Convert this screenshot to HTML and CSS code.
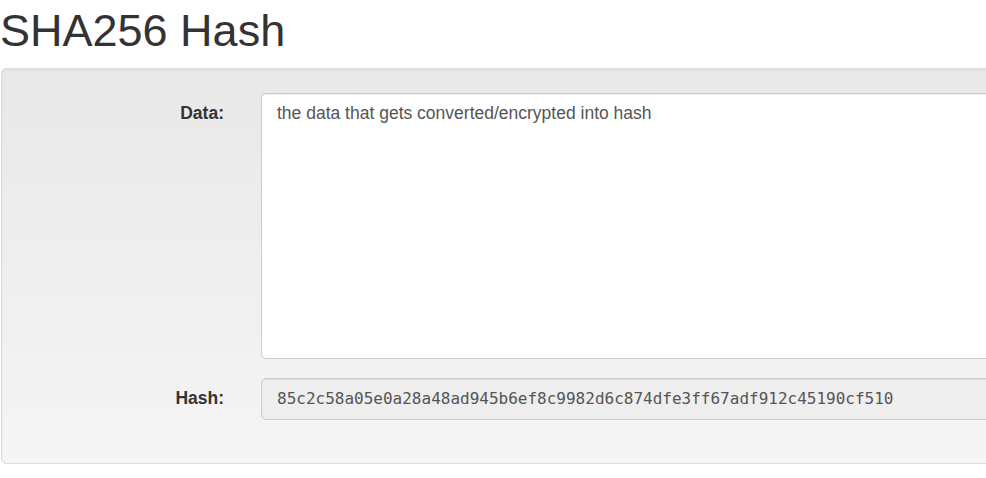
FILE: index.html
```html
<!DOCTYPE html>
<html>
<head>
<meta charset="utf-8">
<link rel="stylesheet" href="styles.css">
</head>
<body>
<h1 class="title">SHA256 Hash</h1>
<div class="well">
  <div class="form-group">
    <label class="control-label">Data:</label>
    <div class="field">
      <textarea class="form-control data-area">the data that gets converted/encrypted into hash</textarea>
    </div>
  </div>
  <div class="form-group">
    <label class="control-label">Hash:</label>
    <div class="field">
      <input class="form-control hash-input" readonly value="85c2c58a05e0a28a48ad945b6ef8c9982d6c874dfe3ff67adf912c45190cf510">
    </div>
  </div>
</div>
</body>
</html>
```
FILE: styles.css
```css
html, body {
  margin: 0;
  padding: 0;
  background: #fff;
  overflow: hidden;
}
body {
  font-family: "Liberation Sans", Arial, sans-serif;
  font-size: 17.5px;
  line-height: 1.42857;
  color: #333;
}
.title {
  margin: 0 0 12px 0;
  padding-top: 6px;
  font-size: 45px;
  font-weight: 500;
  line-height: 1.1;
  color: #333;
}
.well {
  margin-left: 1px;
  width: 1400px;
  padding: 24px 24px 24px 0;
  box-sizing: border-box;
  min-height: 20px;
  background: linear-gradient(to bottom, #e8e8e8 0%, #f5f5f5 100%);
  border: 1px solid #dcdcdc;
  border-radius: 5px;
  box-shadow: inset 0 1px 3px rgba(0,0,0,.05), 0 1px 0 rgba(255,255,255,.1);
}
.form-group {
  display: flex;
  margin-bottom: 19px;
}
.control-label {
  width: 222px;
  flex: none;
  box-sizing: border-box;
  text-align: right;
  font-weight: bold;
  padding-top: 8px;
  padding-right: 0;
}
.field {
  margin-left: 37px;
  flex: 1;
}
.form-control {
  display: block;
  width: 100%;
  box-sizing: border-box;
  padding: 7px 15px;
  font-size: 17.5px;
  line-height: 1.42857;
  color: #555;
  background: #fff;
  border: 1px solid #ccc;
  border-radius: 5px;
  box-shadow: inset 0 1px 1px rgba(0,0,0,.075);
  margin: 0;
}
.data-area {
  height: 266px;
  resize: none;
  font-family: "Liberation Sans", Arial, sans-serif;
  padding-top: 7px;
}
.hash-input {
  height: 42px;
  background: #eee;
  font-family: "DejaVu Sans Mono", "Liberation Mono", monospace;
  font-size: 16px;
}
```
